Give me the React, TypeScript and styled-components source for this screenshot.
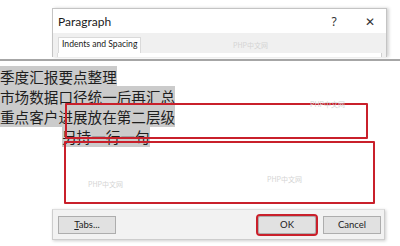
import React from "react";
import styled, { createGlobalStyle } from "styled-components";

const GlobalStyle = createGlobalStyle`
  html, body {
    margin: 0;
    padding: 0;
    background: #ffffff;
  }
  body {
    font-family: Lato, "Noto Sans", "Liberation Sans", sans-serif;
    color: #1a1a1a;
  }
`;

const Page = styled.div`
  width: 400px;
  height: 246px;
  overflow: hidden;
  display: flex;
  flex-direction: column;
  position: relative;
`;

const TopStrip = styled.div`
  height: 59px;
  padding: 8px 0 0 52px;
  box-sizing: border-box;
  display: flex;
  flex-direction: column;
`;

const DialogTop = styled.div`
  width: 333px;
  flex: 1;
  display: flex;
  flex-direction: column;
  background: #f0f0f0;
  border: 1px solid #c4c4c4;
  border-bottom: none;
  box-shadow: 2px 0 3px rgba(0, 0, 0, 0.18);
  margin-bottom: 2px;
`;

const TitleBar = styled.div`
  height: 24px;
  background: #ffffff;
  display: flex;
  align-items: center;
  padding: 0 0 0 5px;
  font-size: 12px;
`;

const Title = styled.span`
  flex: 1;
`;

const TitleButton = styled.span<{ $w: number }>`
  width: ${(p) => p.$w}px;
  text-align: center;
  font-family: "Noto Sans", sans-serif;
  font-size: 12px;
  color: #333;
`;

const TabStrip = styled.div`
  display: flex;
  padding: 3px 0 0 5px;
  height: 17px;
`;

const Tab = styled.div`
  background: #ffffff;
  border: 1px solid #dadada;
  border-bottom: none;
  font-size: 8.6px;
  padding: 0 3px;
  line-height: 13px;
  margin-top: 1px;
`;

const Panel = styled.div`
  flex: 1;
  background: #ffffff;
  margin: 0 4px 0 4px;
  border-right: 1px solid #cfcfcf;
  border-left: 1px solid #dcdcdc;
`;

const Separator = styled.div`
  height: 2px;
  background: #a6a6a6;
`;

const DocArea = styled.div`
  position: relative;
  height: 148px;
  padding-top: 6px;
  box-sizing: border-box;
  font-family: "Noto Sans CJK SC", "Noto Sans", sans-serif;
  font-size: 14.6px;
`;

const Line = styled.div<{ $indent?: number }>`
  padding-left: ${(p) => p.$indent ?? 0}px;
  height: 20px;
  line-height: 20px;
`;

const Highlight = styled.span`
  background: #cbcbcb;
  color: #1e1e1e;
`;

const RedBox = styled.div<{ $l: number; $t: number; $w: number; $h: number }>`
  position: absolute;
  left: ${(p) => p.$l}px;
  top: ${(p) => p.$t}px;
  width: ${(p) => p.$w}px;
  height: ${(p) => p.$h}px;
  border: 2px solid #c9202b;
  border-radius: 1px;
  box-sizing: border-box;
`;

const Watermark = styled.span<{ $l: number; $t: number }>`
  position: absolute;
  left: ${(p) => p.$l}px;
  top: ${(p) => p.$t}px;
  font-family: "Noto Sans CJK SC", sans-serif;
  font-size: 7px;
  color: #d4d4d4;
  white-space: nowrap;
`;

const DialogBottom = styled.div`
  margin-left: 52px;
  width: 333px;
  height: 31px;
  box-sizing: border-box;
  background: #f2f2f2;
  border: 1px solid #cdcdcd;
  border-top-color: #dedede;
  box-shadow: 1px 1px 3px rgba(0, 0, 0, 0.2);
  display: flex;
  align-items: center;
  padding: 0 3px 0 5px;
`;

const Spacer = styled.div`
  flex: 1;
`;

const Button = styled.button<{ $marked?: boolean }>`
  width: 58px;
  height: 18px;
  box-sizing: border-box;
  background: #e1e1e1;
  border: 1px solid #adadad;
  font-family: Lato, "Noto Sans", sans-serif;
  font-size: 9.5px;
  color: #222;
  padding: 0;
  margin-left: 7px;
  outline: ${(p) => (p.$marked ? "2px solid #c9202b" : "none")};
  outline-offset: 0;
  border-radius: ${(p) => (p.$marked ? "2px" : "0")};
  &:first-child {
    margin-left: 0;
  }
`;

const App = () => (
  <>
    <GlobalStyle />
    <Page>
      <TopStrip>
        <DialogTop>
          <TitleBar>
            <Title>Paragraph</Title>
            <TitleButton $w={40}>?</TitleButton>
            <TitleButton $w={32}>✕</TitleButton>
          </TitleBar>
          <TabStrip>
            <Tab>Indents and Spacing</Tab>
          </TabStrip>
          <Panel />
        </DialogTop>
      </TopStrip>
      <Separator />
      <DocArea>
        <Line>
          <Highlight>季度汇报要点整理</Highlight>
        </Line>
        <Line>
          <Highlight>市场数据口径统一后再汇总</Highlight>
        </Line>
        <Line>
          <Highlight>重点客户进展放在第二层级</Highlight>
        </Line>
        <Line $indent={62}>
          <Highlight>另持一行一句</Highlight>
        </Line>
        <RedBox $l={65} $t={42} $w={303} $h={36} />
        <RedBox $l={64} $t={80} $w={311} $h={63} />
        <Watermark $l={310} $t={38}>PHP中文网</Watermark>
        <Watermark $l={88} $t={118}>PHP中文网</Watermark>
        <Watermark $l={267} $t={113}>PHP中文网</Watermark>
      </DocArea>
      <DialogBottom>
        <Button>
          <u>T</u>abs...
        </Button>
        <Spacer />
        <Button $marked>OK</Button>
        <Button>Cancel</Button>
      </DialogBottom>
      <Watermark $l={233} $t={40}>PHP中文网</Watermark>
    </Page>
  </>
);

export default App;
